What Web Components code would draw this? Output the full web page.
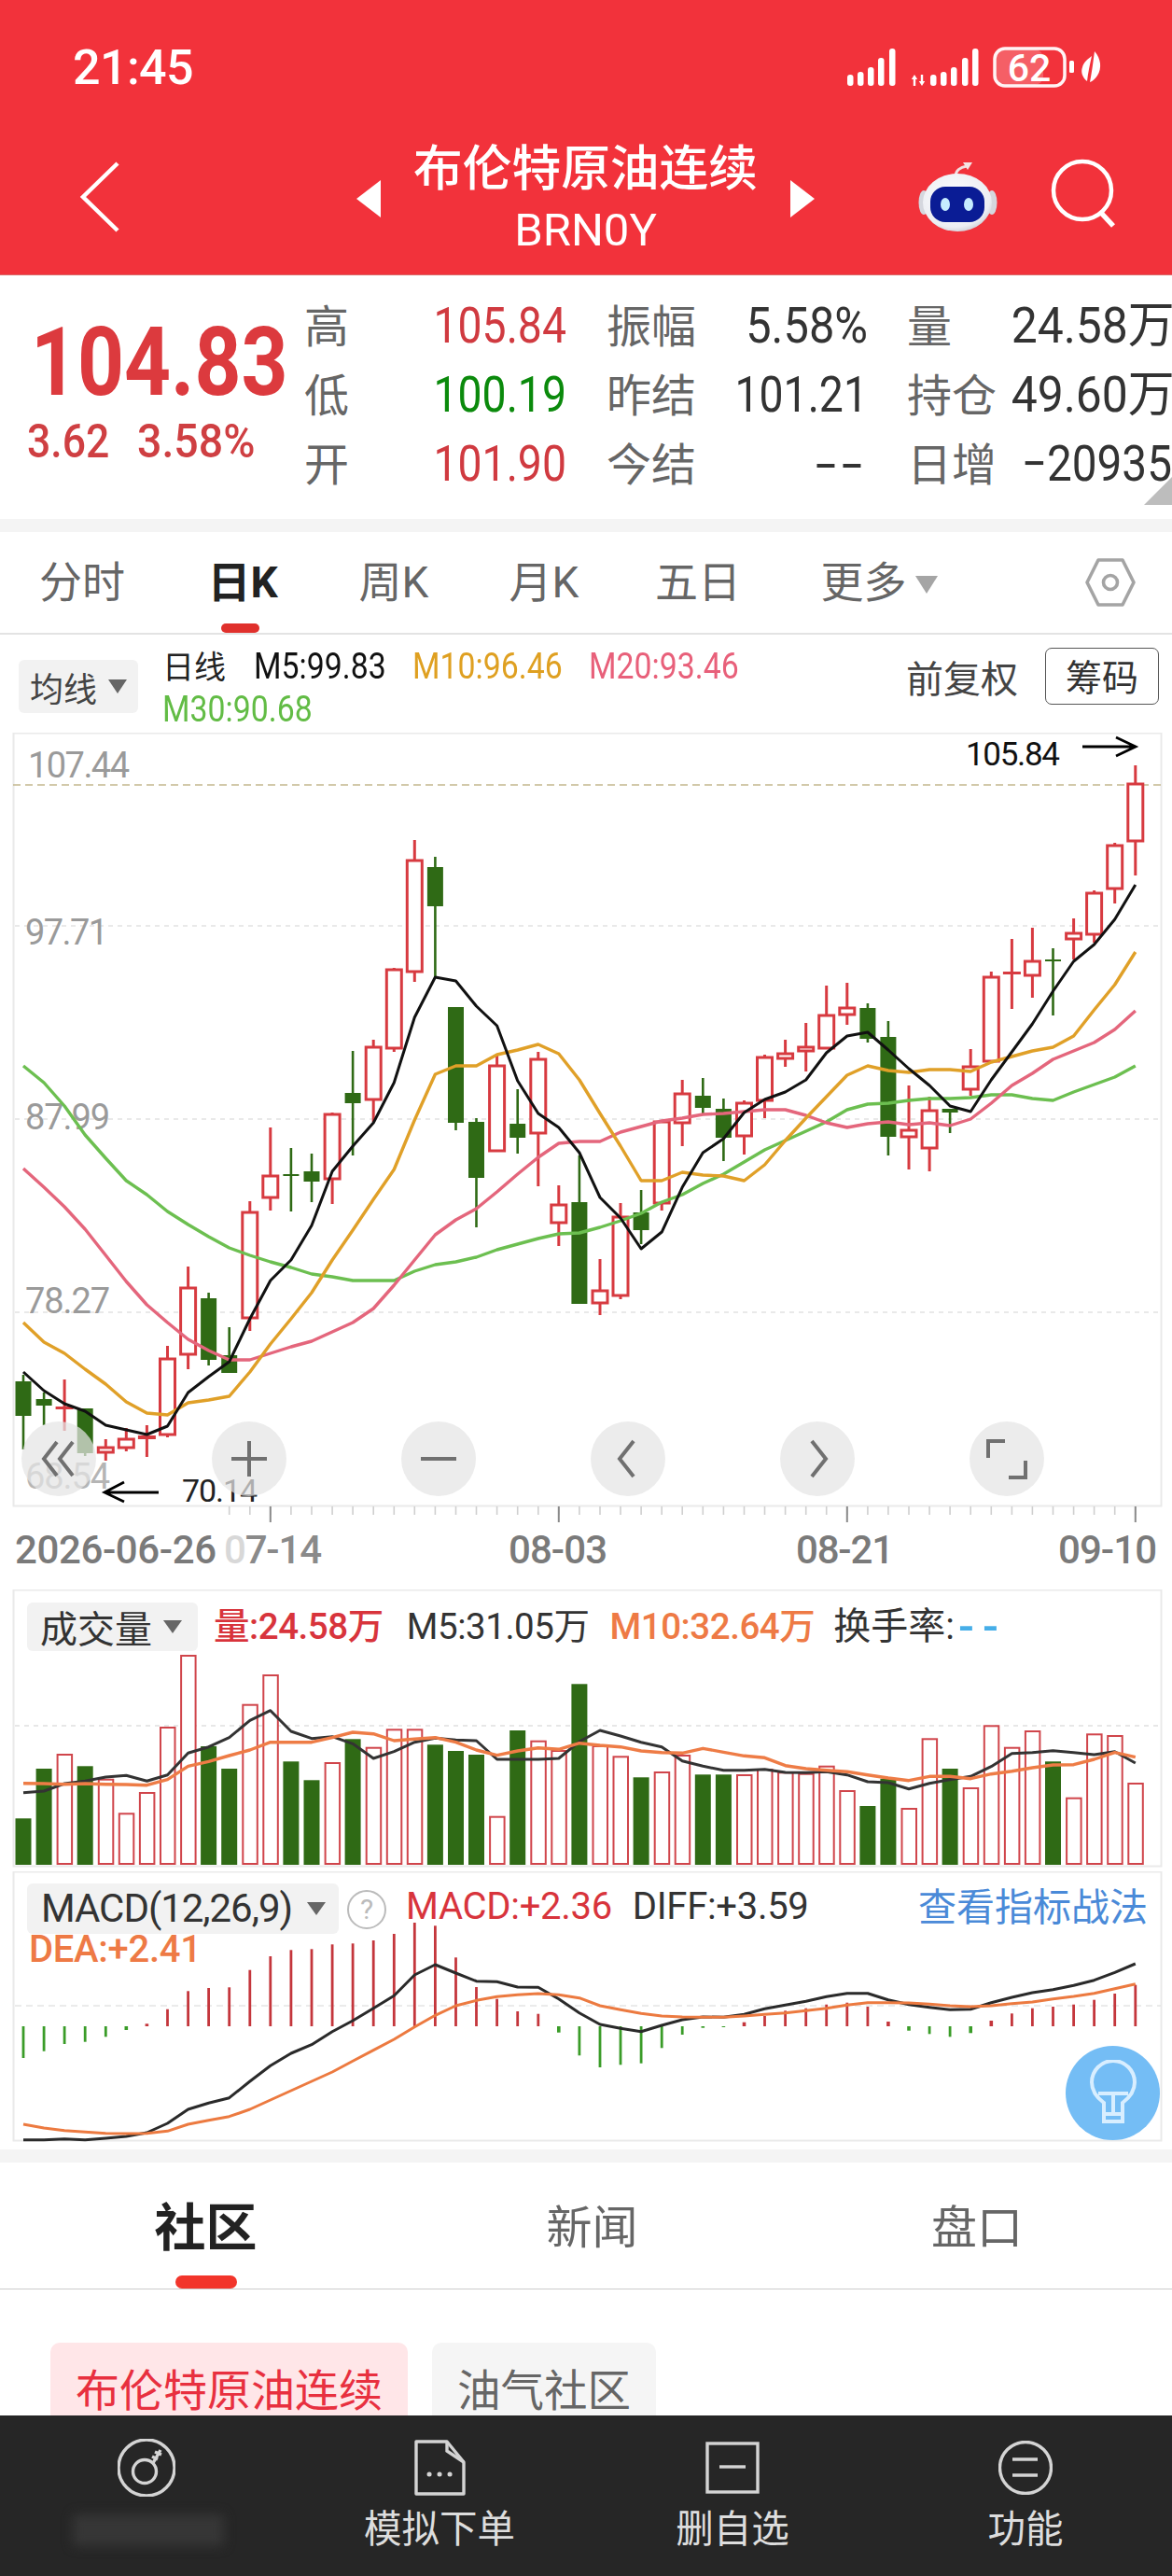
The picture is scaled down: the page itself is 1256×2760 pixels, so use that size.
<!DOCTYPE html>
<html lang="zh-CN"><head><meta charset="utf-8"><title>BRN0Y</title>
<style>
html,body{margin:0;padding:0;background:#fff}
body{width:1256px;height:2760px;overflow:hidden;font-family:Roboto,"Noto Sans CJK SC",sans-serif;position:relative}
:root{--cjk:"Noto Sans CJK SC";--num:Roboto,"Noto Sans CJK SC",sans-serif;--rob:Roboto,"Noto Sans CJK SC",sans-serif}
</style></head><body>
<nav-header></nav-header>
<quote-panel></quote-panel>
<period-tabs></period-tabs>
<chart-toolbar></chart-toolbar>
<kline-chart></kline-chart>
<vol-chart></vol-chart>
<macd-chart></macd-chart>
<news-tabs></news-tabs>
<chip-row><chip-item active>布伦特原油连续</chip-item><chip-item>油气社区</chip-item></chip-row>
<bottom-bar></bottom-bar>
<script>
const X=i=>25+22.07*i;
const RED='#d73a40',GRN='#2f6a15';
const poly=(ys,c,w)=>`<polyline fill="none" stroke="${c}" stroke-width="${w}" stroke-linejoin="round" points="${ys.map((y,i)=>X(i).toFixed(1)+','+y.toFixed(1)).join(' ')}"/>`;
function def(name,css,html,init){
  customElements.define(name,class extends HTMLElement{
    connectedCallback(){
      if(this.shadowRoot)return;
      const r=this.attachShadow({mode:'open'});
      r.innerHTML=`<style>${css}</style>${typeof html==='function'?html(this):html}`;
      if(init)init(r,this);
    }
  });
}
def('nav-header',`
:host{display:block;height:295px;background:#f2323b;color:#fff;box-sizing:border-box;border-bottom:1px solid #d96a6a}
.status{height:146px;display:flex;align-items:center;padding:0 0 0 78px;position:relative}
.time{font:500 52px/1 var(--rob);letter-spacing:-.6px}
.sys{margin-left:auto;display:block;margin-right:70px}
.nav{height:148px;display:flex;align-items:flex-start}
.back{margin:27px 0 0 85px;display:block}
.lead{width:253px;flex:none}
.mid{display:flex;align-items:flex-start;justify-content:center;flex:none}
.tri{margin-top:47px;display:block;flex:none}
.title{width:439px;text-align:center;white-space:nowrap}
.t1{font:500 52.7px/60px var(--cjk)}
.t2{font:400 49px/56px var(--rob);margin-top:13px}
.robot{display:block;margin:25px 0 0 108px;flex:none}
.search{display:block;margin:24px 0 0 57px;flex:none}
`,`
<div class="status"><span class="time">21:45</span>
<svg class="sys" width="278" height="46" viewBox="905 50 278 46">
<g fill="#fff">
${[[908,80],[919,77],[930,72],[941,62],[953,52]].map(([x,t])=>`<rect x="${x-3}" y="${t}" width="6.5" height="${92-t}" rx="3"/>`).join('')}
${[[997,80],[1008,77],[1019,72],[1031,62],[1042,52]].map(([x,t])=>`<rect x="${x-3}" y="${t}" width="6.5" height="${92-t}" rx="3"/>`).join('')}
<path d="M977 80l3.2 5h-2v7h-2.4v-7h-2zM985 92l-3.2-5h2v-7h2.4v7h2z"/>
<rect x="1064" y="53" width="51" height="38" rx="9" opacity=".22"/>
<rect x="1143" y="65" width="5" height="13" rx="1.5"/>
<path d="M1170 55c7 8 8 18 3 26-2 3-5 6-8 7 2-10 3-18 5-33zM1167 60c-2 9-4 18-5 27-5-4-7-10-5-15 1-5 6-9 10-12z"/>
</g>
<rect x="1063" y="52" width="75" height="40" rx="11" fill="none" stroke="#fff" stroke-width="3.5" opacity=".95"/>
<text x="1100" y="87" text-anchor="middle" font-family="Roboto" font-weight="500" font-size="41" fill="#fff">62</text>
</svg></div>
<div class="nav">
<svg class="back" width="44" height="76" viewBox="0 0 44 76"><path d="M41 2 4 38l37 36" fill="none" stroke="#fff" stroke-width="4.5"/></svg>
<div class="lead"></div>
<div class="mid">
<svg class="tri" width="26" height="40" viewBox="0 0 26 40"><path d="M26 0 0 20l26 20z" fill="#fff"/></svg>
<div class="title"><div class="t1">布伦特原油连续</div><div class="t2">BRN0Y</div></div>
<svg class="tri" width="26" height="40" viewBox="0 0 26 40"><path d="M0 0 26 20 0 40z" fill="#fff"/></svg>
</div>
<svg class="robot" width="88" height="80" viewBox="981 172 88 80">
<defs><radialGradient id="h" cx=".45" cy=".4" r=".7"><stop offset="0" stop-color="#fff"/><stop offset=".75" stop-color="#eceef3"/><stop offset="1" stop-color="#b9bcc6"/></radialGradient></defs>
<path d="M1024 190c0-6 5-10 12-11" fill="none" stroke="#f1dfe0" stroke-width="3"/><path d="M1032 175l10 0-5 8z" fill="#f4e4e4"/>
<ellipse cx="990" cy="218" rx="5.5" ry="13" fill="#d5d7de"/><ellipse cx="1063" cy="218" rx="5.5" ry="13" fill="#d5d7de"/>
<ellipse cx="1026" cy="218" rx="37" ry="31" fill="url(#h)"/>
<rect x="997" y="201" width="58" height="38" rx="16" fill="#0a1c95"/>
<ellipse cx="1013" cy="220" rx="5" ry="7" fill="#c6ecff"/><ellipse cx="1038" cy="220" rx="5" ry="7" fill="#c6ecff"/>
</svg>
<svg class="search" width="72" height="76" viewBox="0 0 72 76"><circle cx="34" cy="34" r="31" fill="none" stroke="#fff" stroke-width="4.5"/><path d="M54 58l13 14" stroke="#fff" stroke-width="5.5" fill="none"/></svg>
</div>`);

def('quote-panel',`
:host{display:flex;height:261px;position:relative;background:#fff;box-sizing:border-box}
.left{width:327px;flex:none;padding-left:33px;box-sizing:border-box}
.big{font:700 102px/102px var(--num);color:#dc3a3e;margin-top:42px;white-space:nowrap;transform:scaleX(.855);transform-origin:left center;width:268px}
.sub{display:flex;margin-top:11px;margin-left:-4px;font:500 50px/46px var(--rob);color:#cf3f42;white-space:nowrap}
.sub span{display:block;transform:scaleX(.89);transform-origin:left center;width:118px}
.g{display:grid;grid-template-columns:100px 180px 44px 100px 179px 43px 100px 179px;grid-auto-rows:74px;margin-top:17px;align-items:center;height:222px}
.l{font:400 48px/74px var(--cjk);color:#666;white-space:nowrap;transform:translate(-1px,-3px)}
.v{font:400 53px/74px var(--num);color:#333;text-align:right;white-space:nowrap;transform:scaleX(.875);transform-origin:right center}
.r{color:#d03a40}.gn{color:#0b8a0c}
i{display:block}
.tri{position:absolute;right:0;bottom:15px;width:0;height:0;border-left:30px solid transparent;border-bottom:30px solid #bdbdbd}
`,`
<div class="left"><div class="big">104.83</div><div class="sub"><span>3.62</span><span style="transform:scaleX(.93)">3.58%</span></div></div>
<div class="g">
<div class="l">高</div><div class="v r">105.84</div><i></i><div class="l">振幅</div><div class="v" style="transform:scaleX(.92)">5.58%</div><i></i><div class="l">量</div><div class="v" style="transform:scaleX(.94)">24.58万</div>
<div class="l">低</div><div class="v gn">100.19</div><i></i><div class="l">昨结</div><div class="v" style="transform:scaleX(.875)">101.21</div><i></i><div class="l">持仓</div><div class="v" style="transform:scaleX(.94)">49.60万</div>
<div class="l">开</div><div class="v r">101.90</div><i></i><div class="l">今结</div><div class="v" style="transform:scaleX(1.5);letter-spacing:4px">--</div><i></i><div class="l">日增</div><div class="v" style="margin-right:-4px;transform:scaleX(.9)">−20935</div>
</div><div class="tri"></div>`);

def('period-tabs',`
:host{display:block;border-top:14px solid #f4f4f4;background:#fff}
.row{height:108px;display:grid;grid-template-columns:176px 168px 156px 166px 164px 200px 1fr;align-items:center;border-bottom:2px solid #e3e3e3;position:relative}
.t{font:400 46px/1 var(--rob);color:#666;text-align:center;position:relative;white-space:nowrap}
.on{font-weight:700;color:#222}
.bar{position:absolute;left:237px;bottom:0;width:41px;height:10px;border-radius:5px;background:#e0302c}
.m{display:inline-block;width:0;height:0;border:12px solid transparent;border-top:19px solid #a5a5a5;border-bottom:0;margin-left:9px;vertical-align:4px}
svg{justify-self:end;margin-right:39px}
`,`<div class="row"><div class="t">分时</div><div class="t on">日K</div><div class="t">周K</div><div class="t">月K</div><div class="t">五日</div><div class="t" style="padding-left:24px">更多<span class="m"></span></div>
<svg width="54" height="52" viewBox="0 0 54 52"><path d="M14 2h26l12 24-12 24H14L2 26z" fill="none" stroke="#a4a4a4" stroke-width="3.6" stroke-linejoin="round"/><circle cx="27" cy="26" r="7.5" fill="none" stroke="#a4a4a4" stroke-width="3.6"/></svg>
<div class="bar"></div></div>`);

def('chart-toolbar',`
:host{display:flex;height:105px;box-sizing:border-box;position:relative;background:#fff;align-items:flex-start}
.ma{margin:27px 0 0 20px;width:128px;height:57px;background:#f2f2f2;border-radius:6px;display:flex;align-items:center;padding-left:12px;box-sizing:border-box;font:400 36px/1 var(--cjk);color:#444;flex:none}
.ma b{display:block;width:0;height:0;border:10px solid transparent;border-top:15px solid #666;border-bottom:0;margin-left:12px}
.vals{margin:10px 0 0 26px;width:660px;font:400 38px/46px var(--rob);white-space:nowrap}
.vals span{display:inline-block;transform:scaleX(.89);transform-origin:left center}
.right{margin-left:auto;display:flex;align-items:center;margin-top:14px}
.fq{font:400 40px/1 var(--cjk);color:#444;margin-right:29px}
.cm{width:122px;height:61px;box-sizing:border-box;border:1.5px solid #555;border-radius:7px;font:400 39px/57px var(--cjk);color:#333;text-align:center;margin-right:14px}
`,`<div class="ma">均线<b></b></div>
<div class="vals"><span style="color:#222;font-size:34px;width:98px;font-family:var(--cjk);transform:none">日线</span><span style="color:#111;width:170px">M5:99.83</span><span style="color:#dfa021;width:189px">M10:96.46</span><span style="color:#e8607a">M20:93.46</span><br><span style="color:#62bc45">M30:90.68</span></div>
<div class="right"><div class="fq">前复权</div><div class="cm">筹码</div></div>`);

def('round-btn',`:host{display:block;width:80px;height:80px;border-radius:50%;background:rgba(229,229,229,.72)}svg{display:block}`,
 h=>`<svg width="80" height="80" viewBox="-40 -40 80 80" fill="none" stroke="#707070" stroke-width="4"><path d="${h.getAttribute('d')}"/></svg>`);
def('chart-controls',`:host{position:absolute;left:24px;top:738px;display:flex;gap:123px}`,
`<round-btn d="M-2-18-16 0-2 18M15-18 1 0 15 18" style="transform:translateX(-1px)"></round-btn><round-btn d="M-19 0H19M0-19V19"></round-btn><round-btn d="M-19 0H19"></round-btn><round-btn d="M6-19-9 0 6 19"></round-btn><round-btn d="M-6-19 9 0-6 19"></round-btn><round-btn d="M-20-1V-19H-2M20 2V20H2"></round-btn>`);

const C=[
[1480,1517,1473,1553,'g'],[1499,1506,1492,1527,'g'],[1507,1510,1478,1533,'d'],[1509,1557,1509,1560,'g'],[1550,1557,1542,1565,'r'],[1541,1552,1530,1555,'r'],[1538,1542,1527,1561,'d'],[1455,1538,1442,1540,'r'],[1379,1452,1357,1467,'r'],[1391,1457,1385,1463,'g'],[1452,1471,1422,1471,'g'],[1298,1413,1287,1426,'r'],[1259,1284,1208,1297,'r'],[1258,1260,1230,1298,'g'],[1255,1266,1236,1288,'g'],[1193,1264,1192,1290,'r'],[1171,1182,1126,1238,'g'],[1121,1179,1114,1202,'r'],[1038,1124,1037,1127,'r'],[921,1042,900,1052,'r'],[929,971,918,1047,'g'],[1079,1203,1079,1211,'g'],[1202,1262,1198,1315,'g'],[1141,1234,1130,1234,'r'],[1204,1219,1167,1236,'g'],[1134,1215,1127,1271,'r'],[1290,1311,1270,1335,'r'],[1288,1397,1238,1397,'g'],[1382,1397,1349,1409,'r'],[1303,1389,1289,1392,'r'],[1299,1318,1275,1333,'g'],[1201,1290,1201,1297,'r'],[1171,1204,1157,1228,'r'],[1174,1187,1155,1193,'g'],[1188,1219,1177,1244,'g'],[1181,1218,1179,1237,'r'],[1132,1180,1130,1198,'r'],[1128,1135,1114,1143,'r'],[1121,1127,1096,1148,'r'],[1087,1124,1056,1124,'r'],[1079,1088,1053,1098,'r'],[1080,1113,1075,1117,'g'],[1111,1218,1094,1238,'g'],[1210,1219,1163,1253,'r'],[1189,1231,1175,1255,'r'],[1188,1192,1188,1214,'g'],[1142,1168,1124,1174,'r'],[1046,1138,1041,1138,'r'],[1041,1044,1006,1081,'d'],[1029,1046,994,1069,'r'],[1028,1030,1016,1088,'g'],[999,1007,984,1028,'r'],[956,1002,954,1010,'r'],[905,953,903,968,'r'],[839,902,820,938,'r']];
const M5=[1470,1490,1504,1512,1527,1532,1537,1528,1492,1475,1459,1413,1372,1350,1313,1255,1228,1203,1160,1090,1047,1051,1078,1099,1158,1193,1208,1235,1283,1305,1338,1320,1272,1235,1220,1192,1178,1170,1157,1128,1110,1106,1125,1145,1163,1185,1191,1157,1127,1097,1062,1030,1012,985,948];
const M10=[1417,1438,1450,1467,1483,1502,1514,1516,1503,1500,1496,1470,1440,1413,1385,1350,1318,1285,1253,1200,1151,1142,1142,1130,1125,1119,1129,1157,1193,1228,1265,1265,1256,1259,1260,1265,1248,1222,1198,1175,1152,1142,1147,1149,1146,1146,1148,1138,1132,1126,1122,1110,1082,1055,1020];
const M20=[1252,1272,1293,1317,1345,1373,1398,1417,1435,1447,1457,1457,1450,1443,1437,1427,1417,1402,1377,1350,1323,1307,1295,1277,1258,1240,1225,1223,1223,1213,1207,1201,1198,1194,1193,1191,1189,1189,1195,1203,1208,1204,1202,1205,1203,1206,1199,1182,1163,1150,1135,1126,1117,1103,1083];
const M30=[1142,1160,1185,1216,1241,1265,1280,1298,1312,1325,1337,1345,1352,1358,1365,1368,1372,1372,1372,1362,1355,1352,1347,1339,1333,1327,1322,1321,1315,1308,1300,1288,1280,1268,1258,1245,1232,1222,1212,1202,1189,1183,1182,1179,1177,1177,1176,1173,1173,1177,1179,1170,1162,1154,1142];
function candles(){
  return C.map(([t,b,wt,wb,k],i)=>{
    const x=X(i).toFixed(1);
    if(k==='g')return `<path d="M${x} ${wt}V${wb}" stroke="${GRN}" stroke-width="2.6"/><rect x="${x-8.5}" y="${t}" width="17" height="${b-t}" fill="${GRN}"/>`;
    if(k==='d')return `<path d="M${x} ${wt}V${wb}" stroke="${RED}" stroke-width="3"/><rect x="${x-9.5}" y="${t}" width="19" height="${b-t}" fill="${RED}"/>`;
    return `<path d="M${x} ${wt}V${wb}" stroke="${RED}" stroke-width="3"/><rect x="${x-8}" y="${t+1}" width="16" height="${b-t-2}" fill="#fff" stroke="${RED}" stroke-width="3"/>`;
  }).join('');
}
def('kline-chart',`:host{display:block;height:918px;position:relative}svg{display:block}text{font-family:Roboto}`,
`<svg width="1256" height="918" viewBox="0 785 1256 918">
<rect x="14.5" y="785.5" width="1230" height="828" fill="#fff" stroke="#eaeaea" stroke-width="2"/>
<path d="M14 841H1245" stroke="#c4b88f" stroke-width="1.6" stroke-dasharray="8 5"/>
<path d="M16 992H1244M16 1199H1244M16 1406H1244" stroke="#e2e2e2" stroke-width="1.3" stroke-dasharray="5 5"/>
<g fill="#9a9a9a" font-size="38" font-weight="400"><text x="30" y="833" textLength="109">107.44</text><text x="27" y="1012" textLength="89">97.71</text><text x="27" y="1210" textLength="91">87.99</text><text x="27" y="1407" textLength="91">78.27</text><text x="27" y="1595" fill="#b5b5b5" textLength="91">68.54</text></g>
${candles()}
${poly(M30,'#6cbf50',3.4)}${poly(M20,'#e4667c',3.4)}${poly(M10,'#e0a028',3.4)}${poly(M5,'#111',3)}
<text x="1035" y="820" font-size="35" fill="#111" textLength="101">105.84</text>
<path d="M1160 800H1216M1196 790l21 10-21 10" fill="none" stroke="#000" stroke-width="2.8"/>
<text x="195" y="1609" font-size="34" fill="#222" textLength="81">70.14</text>
<path d="M114 1599H170M133 1588l-21 11 21 10" fill="none" stroke="#000" stroke-width="2.8"/>
<path d="${Array.from({length:45},(_,k)=>`M${X(k+10).toFixed(1)} 1614V1623`).join('')}" stroke="#cfcfcf" stroke-width="1.6"/>
<path d="${[12,26,40,54].map(k=>`M${X(k).toFixed(1)} 1614V1631`).join('')}" stroke="#8a8a8a" stroke-width="2"/>
<g fill="#7a7a7a" font-size="42" font-weight="500"><text x="16" y="1675" textLength="216">2026-06-26</text><text x="240" y="1675" textLength="105" fill="#8a8a8a"><tspan fill="#d8d8d8">0</tspan>7-14</text><text x="545" y="1675" textLength="106">08-03</text><text x="853" y="1675" textLength="105">08-21</text><text x="1134" y="1675" textLength="106">09-10</text></g>
</svg><chart-controls></chart-controls>`);
const VT=[775,615,570,607,650,760,693,483,252,543,615,410,315,592,652,597,520,548,490,490,538,558,570,770,492,527,558,343,543,577,643,627,573,634,634,636,618,628,632,608,687,735,647,744,520,615,678,478,548,495,592,710,505,510,663];
const VG=new Set([0,1,3,9,10,13,14,16,20,21,22,24,27,30,33,34,41,42,45,50]);
const VM5=[692,687,663,655,642,637,655,635,565,545,515,460,428,495,518,512,535,582,560,530,517,523,525,585,585,585,582,528,492,510,530,545,590,607,620,620,617,627,628,625,635,657,660,680,662,650,640,608,566,563,557,563,570,560,597].map(v=>1690+v/3);
const VM10=[662,663,665,663,665,666,668,650,607,592,573,555,530,530,530,515,498,503,525,520,515,530,555,572,558,548,553,533,540,545,558,563,565,550,562,574,580,605,615,620,625,635,645,653,640,640,647,632,623,612,603,602,585,563,578].map(v=>1690+v/3);
def('vol-chart',`:host{display:block;height:302px;position:relative}svg{display:block}
.h{position:absolute;left:29px;top:14px;display:flex;align-items:center;font:400 38.5px/1 var(--rob);white-space:nowrap;letter-spacing:-.45px}
.b{width:183px;height:52px;background:#f2f2f2;border-radius:6px;display:flex;align-items:center;padding-left:14px;box-sizing:border-box;font:400 40px/1 var(--cjk);color:#333;letter-spacing:0;flex:none}
.b i{display:block;width:0;height:0;border:10px solid transparent;border-top:14px solid #666;border-bottom:0;margin-left:12px}
span{display:block}`,
`<svg width="1256" height="302" viewBox="0 1703 1256 302">
<rect x="14.5" y="1703.5" width="1230" height="296" fill="#fff" stroke="#eaeaea" stroke-width="2"/>
<path d="M16 1849H1244" stroke="#e0e0e0" stroke-width="1.3" stroke-dasharray="5 5"/>
${VT.map((z,i)=>{const y=1690+z/3,x=X(i);return VG.has(i)?`<rect x="${(x-8.5).toFixed(1)}" y="${y.toFixed(1)}" width="17" height="${(1998-y).toFixed(1)}" fill="${GRN}"/>`:`<rect x="${(x-7.5).toFixed(1)}" y="${y.toFixed(1)}" width="15.5" height="${(1997-y).toFixed(1)}" fill="#fff" stroke="#d0454b" stroke-width="2"/>`}).join('')}
${poly(VM5,'#333',3)}${poly(VM10,'#ee7c46',3.4)}
</svg>
<div class="h"><div class="b">成交量<i></i></div><span style="color:#d8343c;margin-left:17px;font-weight:500">量:24.58万</span><span style="color:#333;margin-left:25px">M5:31.05万</span><span style="color:#ee7a45;margin-left:22px;font-weight:500">M10:32.64万</span><span style="color:#333;margin-left:20px;font-size:40px;letter-spacing:0">换手率:</span><span style="color:#46aee8;margin-left:4px;font-weight:500;font-size:50px;letter-spacing:9px;line-height:38px">--</span></div>`);
const MH=[615,593,570,563,547,525,505,458,400,390,388,332,288,268,265,250,247,237,216,180,190,292,387,425,465,473,533,607,645,637,632,583,540,518,516,500,480,463,455,443,437,450,498,527,538,547,535,495,472,455,450,443,428,408,380];
const DF=[878,878,875,878,873,867,855,825,780,760,743,690,640,600,572,530,495,455,415,348,315,342,368,370,387,388,425,470,507,520,530,510,492,483,484,475,457,445,433,418,407,407,428,443,452,460,458,437,420,405,395,382,365,340,312].map(v=>2000+v/3);
const DE=[828,840,848,853,857,858,857,850,828,815,803,780,750,720,690,660,625,590,555,515,478,447,430,418,412,408,412,422,447,460,472,480,483,484,484,480,475,470,463,455,445,437,437,438,442,447,450,447,440,435,425,417,407,392,377].map(v=>2000+v/3);
def('macd-chart',`:host{display:block;height:298px;position:relative}svg{display:block}
.h{position:absolute;left:29px;top:13px;display:flex;align-items:flex-start;white-space:nowrap}
.b{width:334px;height:54px;background:#f2f2f2;border-radius:6px;display:flex;align-items:center;padding-left:15px;box-sizing:border-box;font:400 42px/1 var(--rob);color:#333;letter-spacing:-1.05px;flex:none}
.b i{display:block;width:0;height:0;border:10px solid transparent;border-top:14px solid #666;border-bottom:0;margin-left:16px}
.q{width:38px;height:38px;border:2.6px solid #bbb;border-radius:50%;text-align:center;font:400 30px/38px var(--rob);color:#bbb;margin:7px 0 0 9px;flex:none}
.m{font:400 40px/1 var(--rob);margin-top:5px;letter-spacing:-.3px}
.d{position:absolute;left:31px;top:64px;font:500 40px/1 var(--rob);color:#ee7a45;letter-spacing:-.3px}
.l{position:absolute;right:26px;top:13px;font:400 41px/1.1 var(--cjk);color:#4a8ad8;white-space:nowrap}
.tip{position:absolute;left:1142px;top:187px;width:101px;height:101px;border-radius:50%;background:#74bdf5}
.tip svg{margin:15px auto 0}`,
`<svg width="1256" height="298" viewBox="0 2005 1256 298">
<rect x="14.5" y="2005.5" width="1230" height="288" fill="#fff" stroke="#eaeaea" stroke-width="2"/>
<path d="M16 2149H1244" stroke="#d8d8d8" stroke-width="1.2" stroke-dasharray="7 5"/>
${MH.map((z,i)=>{const y=2000+z/3,x=X(i).toFixed(1),r=z<513;const tiny=Math.abs(z-513)<25;return `<path d="M${x} 2171V${y.toFixed(1)}" stroke="${r?'#c4363c':'#3a9c28'}" stroke-width="${tiny?3.6:2.8}"/>`}).join('')}
${poly(DF,'#2a2a2a',3)}${poly(DE,'#ec7a40',3)}
</svg>
<div class="h"><div class="b">MACD(12,26,9)<i></i></div><div class="q">?</div><span class="m" style="color:#d8343c;margin-left:21px">MACD:+2.36</span><span class="m" style="color:#333;margin-left:22px">DIFF:+3.59</span></div>
<div class="d">DEA:+2.41</div><div class="l">查看指标战法</div>
<div class="tip"><svg width="60" height="72" viewBox="0 0 60 72" fill="none" stroke="#d8eeff" stroke-width="4"><path d="M20 46C12 40 7 33 7 24a23 23 0 0 1 46 0c0 9-5 16-13 22v20H20z"/><path d="M14 36H46M30 36V58M20 58H40"/></svg></div>`);
def('news-tabs',`:host{display:block;border-top:14px solid #f4f4f4;background:#fff}
.r{height:135px;display:grid;grid-template-columns:441px 387px 428px;align-items:center;border-bottom:1.5px solid #ccc;position:relative}
.t{text-align:center;font:400 49px/1 var(--cjk);color:#666;transform:translateY(-2px)}
.on{font:700 55px/1 var(--cjk);color:#222}
.bar{position:absolute;left:188px;bottom:0;width:66px;height:14px;border-radius:7px;background:#f2352b}`,
`<div class="r"><div class="t on">社区</div><div class="t">新闻</div><div class="t" style="padding-left:10px">盘口</div><div class="bar"></div></div>`);
def('chip-item',`:host{display:block;height:78px;overflow:hidden;border-radius:10px 10px 0 0;padding:24px 27px 0;background:#f5f5f5;color:#666;font:400 46.5px/48px var(--cjk);white-space:nowrap}
:host([active]){background:#ffe6e8;color:#e8303f;font-size:47px}`,`<slot></slot>`);
def('chip-row',`:host{display:flex;gap:26px;height:135px;padding:57px 0 0 54px;box-sizing:border-box;background:#fff}`,`<slot></slot>`);
const icons=[
`<circle cx="31" cy="31" r="30" /><circle cx="29" cy="35" r="12.5"/><path d="M38 26 46 12M40 14l7 3M37 19l6 3"/>`,
`<path d="M2 2H35L53 24V58H2z" stroke-linejoin="round"/><path d="M35 2V12L53 24"/><path d="M16 37h.1M27 37h.1M38 37h.1" stroke-width="5" stroke-linecap="round"/>`,
`<rect x="2" y="2" width="54" height="52"/><path d="M15 27H43"/>`,
`<circle cx="29" cy="29" r="27.5"/><path d="M15 20H42M15 37H42"/>`];
def('bottom-bar',`:host{position:absolute;left:0;top:2588px;width:1256px;height:172px;background:#262626;display:grid;grid-template-columns:repeat(4,314px)}
.c{display:flex;flex-direction:column;align-items:center;position:relative;color:#ddd;font:400 40.5px/1.1 var(--cjk)}
.ic{height:92px;display:flex;align-items:flex-end;justify-content:center}
svg{display:block;fill:none;stroke:#d4d4d4;stroke-width:3.4}
.t{position:absolute;top:97px;white-space:nowrap}
.blur{position:absolute;top:106px;left:78px;width:162px;height:34px;background:#363636;filter:blur(6px);border-radius:4px}`,
`<div class="c"><div class="ic"><svg style="margin-bottom:5px" width="62" height="62" viewBox="0 0 62 62">${icons[0]}</svg></div><div class="blur"></div></div>
<div class="c"><div class="ic"><svg style="margin-bottom:6px" width="55" height="60" viewBox="0 0 55 60">${icons[1]}</svg></div><div class="t">模拟下单</div></div>
<div class="c"><div class="ic"><svg style="margin-bottom:8px" width="58" height="56" viewBox="0 0 58 56">${icons[2]}</svg></div><div class="t">删自选</div></div>
<div class="c"><div class="ic"><svg style="margin-bottom:7px" width="58" height="58" viewBox="0 0 58 58">${icons[3]}</svg></div><div class="t">功能</div></div>`);
</script></body></html>
